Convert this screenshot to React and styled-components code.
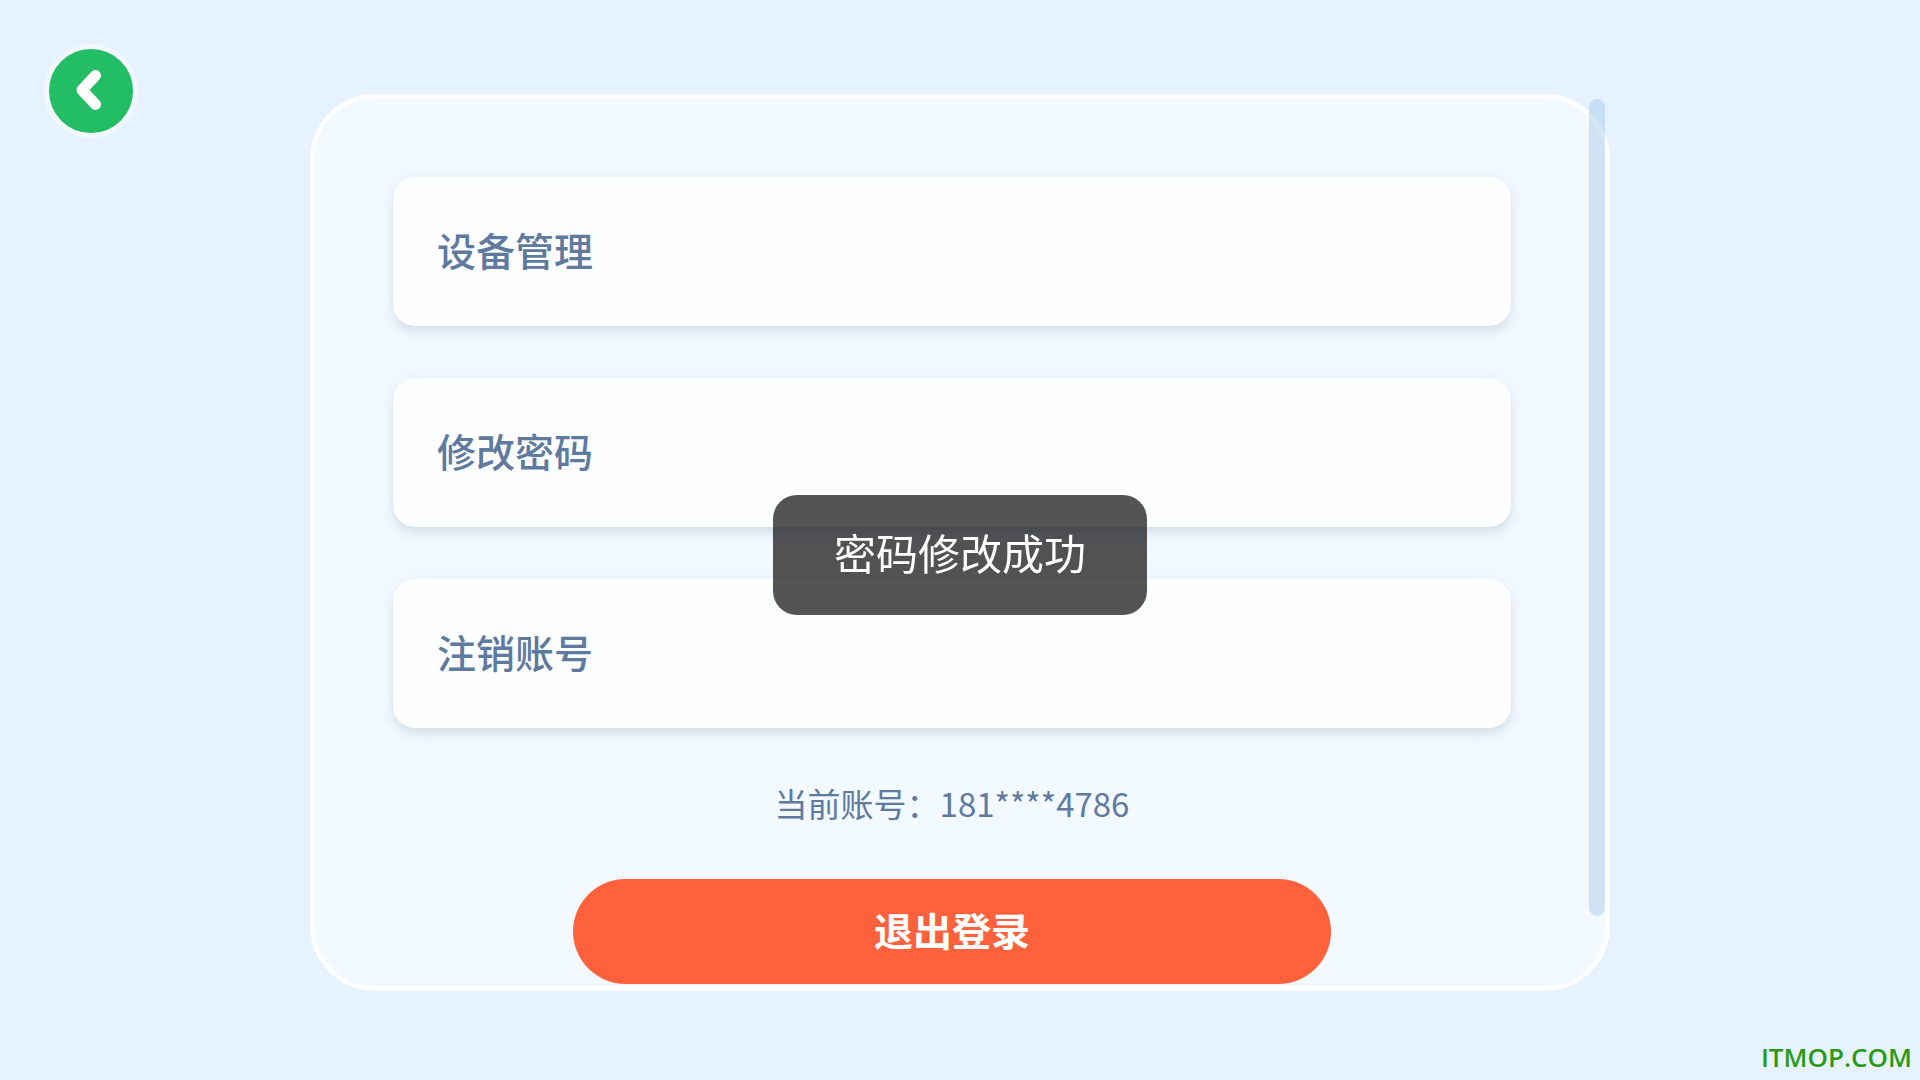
import React from 'react';
import styled, { createGlobalStyle } from 'styled-components';

const GlobalStyle = createGlobalStyle`
  * {
    box-sizing: border-box;
  }
  body {
    margin: 0;
    background-color: #e6f3ff;
    font-family: "Noto Sans CJK SC", "Noto Sans", sans-serif;
    color: #5f7a9f;
  }
  button {
    border: none;
    font-family: inherit;
    cursor: pointer;
  }
`

// page frame
const Page = styled.div`
  display: flex;
  flex-direction: column;
  min-height: 100vh;
`
const Columns = styled.div`
  display: grid;
  grid-template-columns: 1fr minmax(0, 1300px) 1fr;
  align-items: start;
`
const BackButton = styled.button`
  display: flex;
  align-items: center;
  justify-content: center;
  width: 94px;
  height: 94px;
  margin: 44px;
  padding: 0;
  border: 5px solid #f2f8ff;
  border-radius: 50%;
  background-color: #23be63;
`

// settings panel
const Panel = styled.main`
  display: flex;
  margin-top: 94px;
  border: 5px solid #fdfeff;
  border-radius: 65px;
  background-color: #f2f9ff;
`
const Content = styled.div`
  display: flex;
  flex: 1;
  flex-direction: column;
  align-items: center;
  padding: 78px 78px 2px;
`
const Menu = styled.nav`
  display: flex;
  flex-direction: column;
  gap: 52px;
  width: 100%;
`
const MenuItem = styled.button`
  height: 149px;
  padding: 0 44px 5px;
  border-radius: 22px;
  background-color: #fdfeff;
  box-shadow: 0 6px 10px rgba(120, 150, 150, 0.2), 0 2px 18px rgba(235, 235, 255, 0.6);
  color: inherit;
  font-size: 39px;
  font-weight: 500;
  line-height: 56px;
  text-align: left;
`
const Account = styled.p`
  margin: 51px 0 52px;
  font-size: 33px;
  line-height: 48px;
`
const LogoutButton = styled.button`
  width: 100%;
  max-width: 758px;
  height: 105px;
  padding: 0 0 5px;
  border-radius: 53px;
  background-color: #ff613d;
  color: #fff;
  font-size: 39px;
  font-weight: 700;
  line-height: 56px;
`
const ScrollThumb = styled.div`
  width: 16px;
  height: 817px;
  border-radius: 8px;
  background-color: rgba(135, 180, 225, 0.32);
`

// floats over the page
const Toast = styled.div`
  position: fixed;
  top: 495px;
  left: 50%;
  transform: translateX(-50%);
  padding: 27px 61px 33px;
  border-radius: 24px;
  background-color: rgba(0, 0, 0, 0.67);
  color: #fff;
  font-size: 42px;
  line-height: 60px;
  white-space: nowrap;
`
const Footer = styled.footer`
  margin-top: auto;
  padding: 0 8px 5px;
  color: #2a9a15;
  font-family: "Open Sans", sans-serif;
  font-size: 26px;
  font-weight: 600;
  line-height: 36px;
  text-align: right;
`

const menuItems = ['设备管理', '修改密码', '注销账号'];

const App = () => {
  return (
    <Page>
      <GlobalStyle />
      <Columns>
        <BackButton aria-label="返回">
          <svg width="84" height="84" viewBox="0 0 84 84" fill="none">
            <path d="M46.5 26.5 L33 41 L46.5 55.5" stroke="#fff" strokeWidth="11" strokeLinecap="round" strokeLinejoin="round" />
          </svg>
        </BackButton>
        <Panel>
          <Content>
            <Menu>
              {menuItems.map((item) => (
                <MenuItem key={item}>{item}</MenuItem>
              ))}
            </Menu>
            <Account>当前账号：181****4786</Account>
            <LogoutButton>退出登录</LogoutButton>
          </Content>
          <ScrollThumb />
        </Panel>
      </Columns>
      <Footer>ITMOP.COM</Footer>
      <Toast role="status">密码修改成功</Toast>
    </Page>
  )
}
export default App;
